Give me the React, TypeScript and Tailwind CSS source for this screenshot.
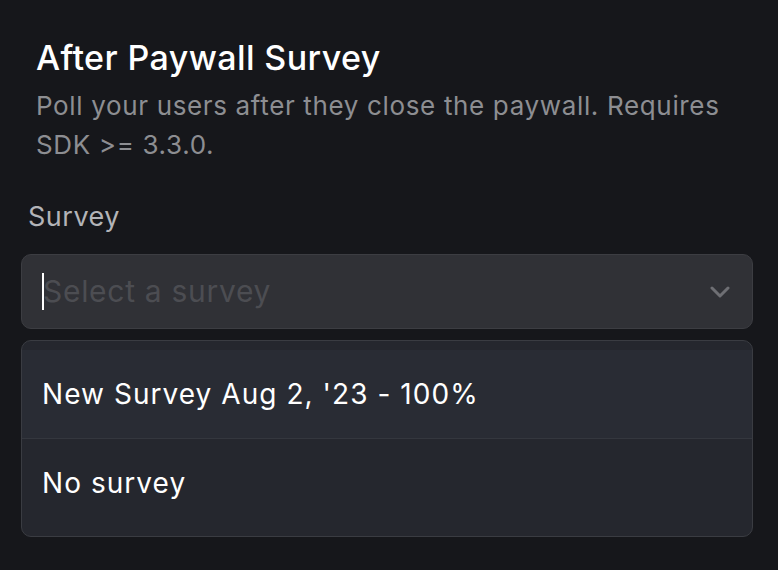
import React from "react";

export default function App() {
  return (
    <div
      className="w-[778px] h-[570px] bg-[#16171b] overflow-hidden"
      style={{ fontFamily: "Inter, 'Noto Sans', sans-serif" }}
    >
      <div className="pt-[38px] pl-[21px] pr-[25px]">
        <div className="pl-[15px]">
          <h1 className="text-[34px] leading-[40px] font-medium text-white tracking-[0.4px]">
            After Paywall Survey
          </h1>
          <p className="mt-[8px] text-[26px] leading-[39px] text-[#8d8e92] tracking-[0.65px]">
            Poll your users after they close the paywall. Requires SDK &gt;= 3.3.0.
          </p>
        </div>
        <div className="mt-[35px] pl-[7px] text-[27px] leading-[36px] text-[#b3b4b8] tracking-[0.5px]">
          Survey
        </div>
        <div className="mt-[19px] h-[75px] rounded-[10px] border border-[#3c3d42] bg-[#303136] flex items-center pl-[20px] pr-[22px]">
          <div className="relative flex-1 flex items-center">
            <span className="w-[2px] h-[37px] bg-white" />
            <span className="-ml-[1px] text-[30px] text-[#4c4d52] tracking-[0.7px]">Select a survey</span>
          </div>
          <svg width="20" height="12" viewBox="0 0 20 12" fill="none">
            <path d="M2 2 L10 10 L18 2" stroke="#6e6f74" strokeWidth="3" strokeLinecap="round" strokeLinejoin="round" />
          </svg>
        </div>
        <div className="mt-[11px] rounded-[10px] border border-[#3a3c42] bg-[#25272e] py-[9px] overflow-hidden">
          <div className="h-[89px] bg-[#292c34] border-b border-[#34373e] flex items-center pl-[20px] text-[28px] text-white tracking-[1.05px]">
            New Survey Aug 2, '23 - 100%
          </div>
          <div className="h-[88px] flex items-center pl-[20px] text-[28px] text-white tracking-[1.05px]">
            No survey
          </div>
        </div>
      </div>
    </div>
  );
}
